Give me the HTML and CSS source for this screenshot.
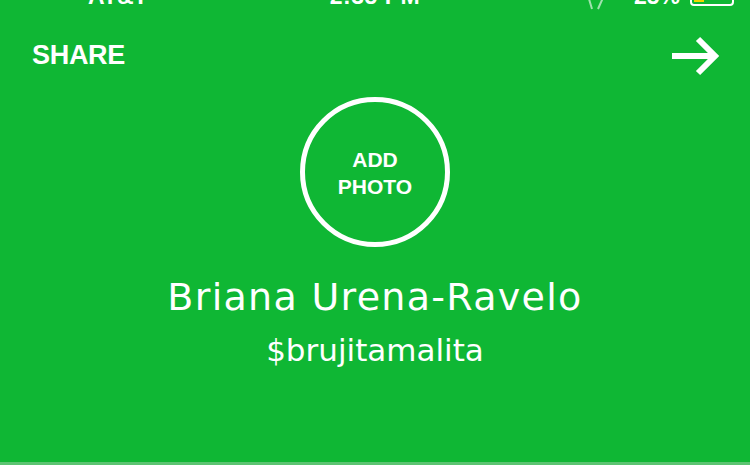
FILE: index.html
```html
<!DOCTYPE html>
<html lang="en">

<head>
    <meta charset="UTF-8">
    <meta name="viewport" content="width=device-width, initial-scale=1.0">
    <title>Profile</title>
    <link rel="stylesheet" href="styles.css">
</head>

<body>
    <div class="status">
        <div class="status-left">AT&amp;T <span class="dot">•</span></div>
        <div class="status-time">2:35 PM</div>
        <div class="status-right">
            <svg class="icons" width="36" height="30" viewBox="0 0 36 30">
                <path d="M2 8 L8 28 M22 10 L14 28" fill="none" stroke="white" stroke-opacity="0.6" stroke-width="2" />
            </svg>
            <span class="pct">25%</span>
            <span class="battery"><span class="battery-fill"></span></span>
        </div>
    </div>

    <div class="top">
        <a class="share" href="#">SHARE</a>
        <a class="next" href="#">
            <svg width="48" height="42" viewBox="0 0 48 42">
                <path d="M0 21 H43 M26 4 L43 21 L26 38" fill="none" stroke="white" stroke-width="6" stroke-linecap="butt" stroke-linejoin="miter" />
            </svg>
        </a>
    </div>

    <div class="photo">ADD<br>PHOTO</div>

    <h1 class="name">Briana Urena-Ravelo</h1>
    <div class="tag">$brujitamalita</div>

    <div class="bottom-line"></div>
</body>

</html>
```

FILE: styles.css
```css
* {
    box-sizing: border-box;
}

body {
    margin: 0;
    height: 465px;
    background: #0fb734;
    color: white;
    font-family: 'Liberation Sans', Arial, sans-serif;
    overflow: hidden;
    display: flex;
    flex-direction: column;
}

/* Status bar (cut off at the top of the shot) */
.status {
    display: grid;
    grid-template-columns: 1fr auto 1fr;
    align-items: end;
    height: 30px;
    margin-top: -19px;
    padding: 0 16px;
    font-size: 23px;
    font-weight: bold;
    line-height: 30px;
    flex-shrink: 0;
}

.status-left {
    padding-left: 72px;
}

.status-time {
    letter-spacing: 0.5px;
}

.dot {
    margin-left: 16px;
}

.status-right {
    display: flex;
    justify-content: flex-end;
    align-items: flex-end;
    gap: 10px;
}

.pct {
    margin-right: -8px;
}

.icons {
    margin-right: 4px;
}

.battery {
    width: 44px;
    height: 20px;
    margin-bottom: 5px;
    margin-left: 8px;
    border: 2px solid white;
    border-radius: 4px;
    padding: 2px;
    display: flex;
}

.battery-fill {
    width: 10px;
    background: #f2d600;
}

/* Header */
.top {
    display: flex;
    justify-content: space-between;
    align-items: center;
    padding: 26px 32px 0 32px;
    height: 63px;
    flex-shrink: 0;
}

.share {
    color: white;
    text-decoration: none;
    font-weight: bold;
    font-size: 27px;
    letter-spacing: -0.3px;
}

.next {
    display: flex;
    margin-right: -2px;
}

/* Add photo circle */
.photo {
    width: 150px;
    height: 150px;
    border: 5px solid white;
    border-radius: 50%;
    margin: 23px auto 0 auto;
    display: flex;
    align-items: center;
    justify-content: center;
    text-align: center;
    font-size: 21px;
    font-weight: bold;
    line-height: 27px;
    padding-top: 2px;
    flex-shrink: 0;
}

.name {
    margin: 28px 0 0 0;
    text-align: center;
    font-family: 'DejaVu Sans', sans-serif;
    font-weight: normal;
    font-size: 38px;
    line-height: 44px;
    letter-spacing: 1.3px;
}

.tag {
    margin-top: 11px;
    text-align: center;
    font-family: 'DejaVu Sans', sans-serif;
    font-size: 31px;
    line-height: 40px;
}

.bottom-line {
    margin-top: auto;
    height: 3px;
    background: #5cc472;
}
```
